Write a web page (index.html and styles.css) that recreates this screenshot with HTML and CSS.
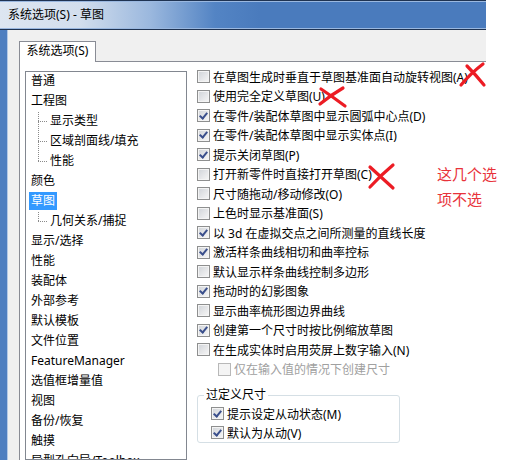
FILE: index.html
```html
<!DOCTYPE html>
<html lang="zh-CN">
<head>
  <meta charset="utf-8">
  <title>系统选项(S) - 草图</title>
  <link rel="stylesheet" href="styles.css">
</head>
<body>
  <div class="window">
    <div class="titlebar">系统选项(S) - 草图</div>
    <div class="frame">
      <div class="tab">系统选项(S)</div>
      <div class="page">
        <ul class="tree">
          <li><span>普通</span></li>
          <li><span>工程图</span></li>
          <li class="child"><span>显示类型</span></li>
          <li class="child"><span>区域剖面线/填充</span></li>
          <li class="child last"><span>性能</span></li>
          <li><span>颜色</span></li>
          <li><span class="selected">草图</span></li>
          <li class="child last"><span>几何关系/捕捉</span></li>
          <li><span>显示/选择</span></li>
          <li><span>性能</span></li>
          <li><span>装配体</span></li>
          <li><span>外部参考</span></li>
          <li><span>默认模板</span></li>
          <li><span>文件位置</span></li>
          <li><span>FeatureManager</span></li>
          <li><span>选值框增量值</span></li>
          <li><span>视图</span></li>
          <li><span>备份/恢复</span></li>
          <li><span>触摸</span></li>
          <li><span>异型孔向导/Toolbox</span></li>
        </ul>

        <div class="options">
          <div class="opt"><span class="box"></span>在草图生成时垂直于草图基准面自动旋转视图(A)</div>
          <div class="opt"><span class="box"></span>使用完全定义草图(U)</div>
          <div class="opt"><span class="box on"></span>在零件/装配体草图中显示圆弧中心点(D)</div>
          <div class="opt"><span class="box on"></span>在零件/装配体草图中显示实体点(I)</div>
          <div class="opt"><span class="box on"></span>提示关闭草图(P)</div>
          <div class="opt"><span class="box"></span>打开新零件时直接打开草图(C)</div>
          <div class="opt"><span class="box"></span>尺寸随拖动/移动修改(O)</div>
          <div class="opt"><span class="box"></span>上色时显示基准面(S)</div>
          <div class="opt"><span class="box on"></span>以 3d 在虚拟交点之间所测量的直线长度</div>
          <div class="opt"><span class="box on"></span>激活样条曲线相切和曲率控标</div>
          <div class="opt"><span class="box"></span>默认显示样条曲线控制多边形</div>
          <div class="opt"><span class="box on"></span>拖动时的幻影图象</div>
          <div class="opt"><span class="box"></span>显示曲率梳形图边界曲线</div>
          <div class="opt"><span class="box on"></span>创建第一个尺寸时按比例缩放草图</div>
          <div class="opt"><span class="box"></span>在生成实体时启用荧屏上数字输入(N)</div>
          <div class="opt sub disabled"><span class="box"></span>仅在输入值的情况下创建尺寸</div>

          <fieldset class="group">
            <legend>过定义尺寸</legend>
            <div class="opt"><span class="box on"></span>提示设定从动状态(M)</div>
            <div class="opt"><span class="box on"></span>默认为从动(V)</div>
          </fieldset>
        </div>
      </div>
    </div>
  </div>

  <!-- hand drawn annotations -->
  <svg class="marks" width="523" height="460" viewBox="0 0 523 460">
    <g fill="none" stroke="#ec1c24" stroke-width="3.2" stroke-linecap="round">
      <path d="M461 85 Q471 73 483 64"/>
      <path d="M467 66 Q476 75 484 85"/>
      <path d="M321 89 Q333 97 345 106"/>
      <path d="M320 104 Q331 95 343 88"/>
      <path d="M370 167 Q381 177 393 188"/>
      <path d="M370 187 Q381 175 393 165"/>
    </g>
  </svg>
  <div class="note">这几个选<br>项不选</div>
</body>
</html>
```

FILE: styles.css
```css
body {
  margin: 0;
  width: 523px;
  height: 460px;
  overflow: hidden;
  position: relative;
  background: #fff;
  font-family: "Noto Sans", "Noto Sans CJK SC", sans-serif;
  font-size: 12px;
  color: #000;
}

.window {
  width: 486px;
  height: 460px;
  display: flex;
  flex-direction: column;
}

.titlebar {
  height: 28px;
  line-height: 28px;
  padding-left: 8px;
  border-top: 1px solid #1f3352;
  border-bottom: 1px solid #1f3352;
  box-shadow: inset 0 1px 0 #9ab8e0, inset 0 -1px 0 #9ab8e0;
  background: linear-gradient(to right, #dde6f1 0, #d2deed 80px, #9bb8de 150px, #5384c4 215px, #4a7bbd 260px);
  white-space: nowrap;
}

.frame {
  flex: 1;
  display: flex;
  flex-direction: column;
  padding: 11px 0 0 12px;
  background: #f0f0f0;
  border-left: 7px solid #4f7fc0;
  box-shadow: inset 1px 0 0 #b4c9e6;
  min-height: 0;
}

.tab {
  align-self: flex-start;
  width: 75px;
  height: 20px;
  line-height: 18px;
  text-align: center;
  background: #fff;
  border: 1px solid #898c95;
  border-bottom: 0;
  margin-bottom: -1px;
  position: relative;
}

.page {
  flex: 1;
  display: flex;
  align-items: flex-start;
  gap: 10px;
  padding-left: 5px;
  background: #fff;
  border-top: 1px solid #898c95;
  border-left: 1px solid #898c95;
  min-height: 0;
}

/* tree */
.tree {
  list-style: none;
  margin: 9px 0 0;
  padding: 0;
  width: 160px;
  align-self: stretch;
  border: 1px solid #828790;
  overflow: hidden;
}

.tree li {
  height: 20px;
  line-height: 18px;
  padding-left: 3px;
  white-space: nowrap;
}

.tree li span {
  display: inline-block;
  padding: 0 2px;
}

.tree li.child {
  padding-left: 22px;
  background:
    repeating-linear-gradient(to bottom, #8a8a8a 0 1px, transparent 1px 2px) 12px 0 / 1px 100% no-repeat,
    repeating-linear-gradient(to right, #8a8a8a 0 1px, transparent 1px 2px) 12px 9px / 10px 1px no-repeat;
}

.tree li.child.last {
  background-size: 1px 10px, 10px 1px;
}

.tree .selected {
  background: #3399ff;
  color: #fff;
  height: 18px;
}

/* options */
.options {
  margin-top: 5px;
  display: flex;
  flex-direction: column;
}

.opt {
  display: flex;
  align-items: center;
  gap: 3px;
  height: 19.5px;
  white-space: nowrap;
}

.opt.sub {
  margin-left: 21px;
}

.opt.disabled {
  color: #a0a0a0;
}

.box {
  flex: none;
  width: 11px;
  height: 11px;
  border: 1px solid #8e8f8f;
  background: linear-gradient(135deg, #cfd3d8 0, #e6e7e9 55%, #f7f7f7 100%);
  box-shadow: inset 0 0 0 1px #f4f4f4;
  display: flex;
  align-items: center;
  justify-content: center;
}

.box.on::after {
  content: "";
  width: 3px;
  height: 6px;
  margin-top: -2px;
  border: solid #3a4f8c;
  border-width: 0 2px 2px 0;
  transform: rotate(40deg);
}

.disabled .box {
  border-color: #b8b8b8;
  background: #f4f4f4;
}

.group {
  box-sizing: border-box;
  width: 203px;
  margin: 7px 0 0;
  padding: 0 0 0 13px;
  border: 1px solid #d5dfe5;
  border-radius: 3px;
}

.group legend {
  padding: 0 2px;
  margin-left: -7px;
  line-height: 18px;
}

.group .opt {
  height: 19px;
}

/* annotations */
.marks {
  position: absolute;
  left: 0;
  top: 0;
  pointer-events: none;
}

.note {
  position: absolute;
  left: 437px;
  top: 161px;
  font-family: "Noto Sans CJK SC", sans-serif;
  font-size: 15px;
  line-height: 25px;
  color: #e8323a;
}
```
